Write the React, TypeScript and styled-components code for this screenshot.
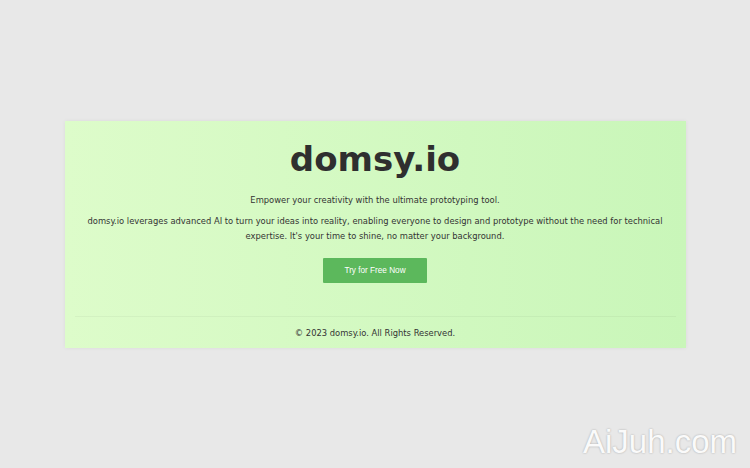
import { FC } from "react";
import styled, { createGlobalStyle } from "styled-components";

const GlobalStyle = createGlobalStyle`
  html, body {
    margin: 0;
    padding: 0;
    height: 100%;
    background: #e8e8e8;
  }
  #root {
    height: 100%;
  }
`;

// styled components
const Page = styled.div({
  height: "100vh",
  display: "flex",
  alignItems: "center",
  justifyContent: "center",
  position: "relative",
  fontFamily: '"DejaVu Sans Condensed", "DejaVu Sans", Verdana, sans-serif',
  color: "#333",
});

const Card = styled.div({
  width: 621,
  boxSizing: "border-box",
  padding: "0 10px",
  background: "linear-gradient(to right, #ddfcca, #c9f6b9)",
  boxShadow: "0 0 4px rgba(0, 0, 0, 0.06)",
});

const Hero = styled.section({
  display: "flex",
  flexDirection: "column",
  alignItems: "center",
  textAlign: "center",
  padding: "18px 0 33px",
});

const Title = styled.h1({
  margin: 0,
  fontFamily: '"DejaVu Sans", Verdana, sans-serif',
  fontSize: 34,
  fontWeight: 700,
  lineHeight: "40px",
  color: "#2f2f2f",
});

const Text = styled.p<{ $mt: number }>(({ $mt }) => ({
  margin: `${$mt}px 0 0`,
  padding: "0 12px",
  fontSize: 9.3,
  lineHeight: "15px",
  color: "#333",
}));

const CtaButton = styled.button({
  marginTop: 15,
  width: 104,
  height: 25,
  border: "none",
  borderRadius: 1,
  background: "#5cb85c",
  color: "#fff",
  fontFamily: '"Liberation Sans", Arial, sans-serif',
  fontSize: 8.2,
  cursor: "pointer",
});

const Footer = styled.footer({
  borderTop: "1px solid rgba(0, 0, 0, 0.04)",
  padding: "9px 0 9px",
  textAlign: "center",
  fontSize: 9.3,
  lineHeight: "13px",
  color: "#333",
});

const Watermark = styled.div({
  position: "absolute",
  right: 13,
  bottom: 7,
  fontFamily: '"Liberation Sans", Arial, sans-serif',
  fontSize: 33,
  color: "#fafafa",
  textShadow: "0 0 2px rgba(0, 0, 0, 0.3)",
});

const App: FC = () => {
  return (
    <>
      <GlobalStyle />
      <Page>
        <Card>
          <Hero>
            <Title>domsy.io</Title>
            <Text $mt={13}>Empower your creativity with the ultimate prototyping tool.</Text>
            <Text $mt={6}>
              domsy.io leverages advanced AI to turn your ideas into reality, enabling everyone to
              design and prototype without the need for technical expertise. It's your time to
              shine, no matter your background.
            </Text>
            <CtaButton>Try for Free Now</CtaButton>
          </Hero>
          <Footer>© 2023 domsy.io. All Rights Reserved.</Footer>
        </Card>
        <Watermark>AiJuh.com</Watermark>
      </Page>
    </>
  );
};

export default App;
